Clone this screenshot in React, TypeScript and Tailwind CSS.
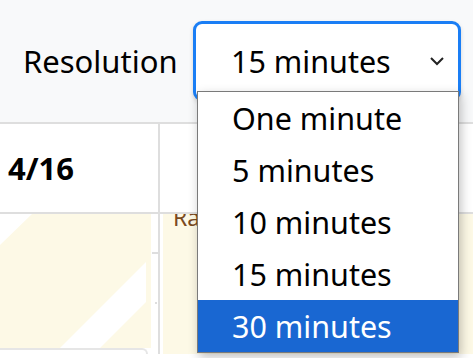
import React from 'react';

const options = ['One minute', '5 minutes', '10 minutes', '15 minutes', '30 minutes'];

const App: React.FC = () => {
  return (
    <div className="relative w-[473px] h-[358px] overflow-hidden bg-white text-[#212529]" style={{ fontFamily: '"Noto Sans", "DejaVu Sans", sans-serif' }}>
      {/* Toolbar */}
      <div className="h-[122px] bg-[#f8f9fa] flex items-center pl-[23px] gap-[15px]">
        <span className="w-[155px] text-[31px] leading-none text-black whitespace-nowrap">Resolution</span>
        <div className="w-[268px] h-[80px] rounded-[9px] border-[3px] border-[#1a7ef5] bg-white shadow-[0_2px_4px_rgba(0,0,0,0.15)] flex items-center pl-[35px] pr-[13px]">
          <span className="text-[30.5px] leading-none text-black flex-1">15 minutes</span>
          <svg width="16" height="10" viewBox="0 0 16 10" fill="none" stroke="#222" strokeWidth="2">
            <path d="M2 2 L8 8 L14 2" />
          </svg>
        </div>
      </div>

      {/* Table */}
      <div className="border-t-2 border-[#dedede]">
        <div className="flex h-[90px] border-b-2 border-[#dedede]">
          <div className="w-[160px] border-r-2 border-[#dedede] flex items-center pl-[8px]">
            <span className="text-[31px] font-bold text-black">4/16</span>
          </div>
          <div className="flex-1" />
        </div>
        <div className="flex h-[140px]">
          <div className="w-[160px] border-r-2 border-[#dedede] flex flex-col">
            <div className="flex flex-1">
              <div className="relative w-[151px] h-[134px] bg-[#fdf9e6] overflow-hidden">
                <svg className="absolute inset-0" width="151" height="134" viewBox="0 0 151 134">
                  <polygon points="0,0 32,0 0,31" fill="#fff" />
                  <polygon points="60,134 100,134 146,88 146,48" fill="#fff" />
                </svg>
              </div>
              <div className="flex-1 relative">
                <div className="absolute left-[1px] right-0 top-[38px] h-[2px] bg-[#dedede]" />
                <div className="absolute left-[4px] top-[88px] w-[2px] h-[2px] bg-[#dedede]" />
              </div>
            </div>
            <div className="h-[6px] mr-[10px] rounded-tr-[6px] border-t-2 border-r-2 border-[#e6e6e6]" />
          </div>
          <div className="flex-1 bg-[#fdf9e6] ml-[3px] pl-[10px] overflow-hidden">
            <div className="-mt-[10px] text-[23px] text-[#7a4a1e] leading-[1.2]">Rate</div>
          </div>
        </div>
      </div>

      {/* Open dropdown list */}
      <div className="absolute left-[197px] top-[91px] w-[262px] border border-[#7a7a7a] bg-white shadow-[2px_4px_10px_rgba(0,0,0,0.25)]">
        {options.map((o, i) => (
          <div
            key={o}
            className={`h-[52px] flex items-center pl-[34px] text-[30.5px] leading-none ${i === 4 ? 'bg-[#1967d2] text-white' : 'text-black'}`}
          >
            {o}
          </div>
        ))}
      </div>
    </div>
  );
};

export default App;
